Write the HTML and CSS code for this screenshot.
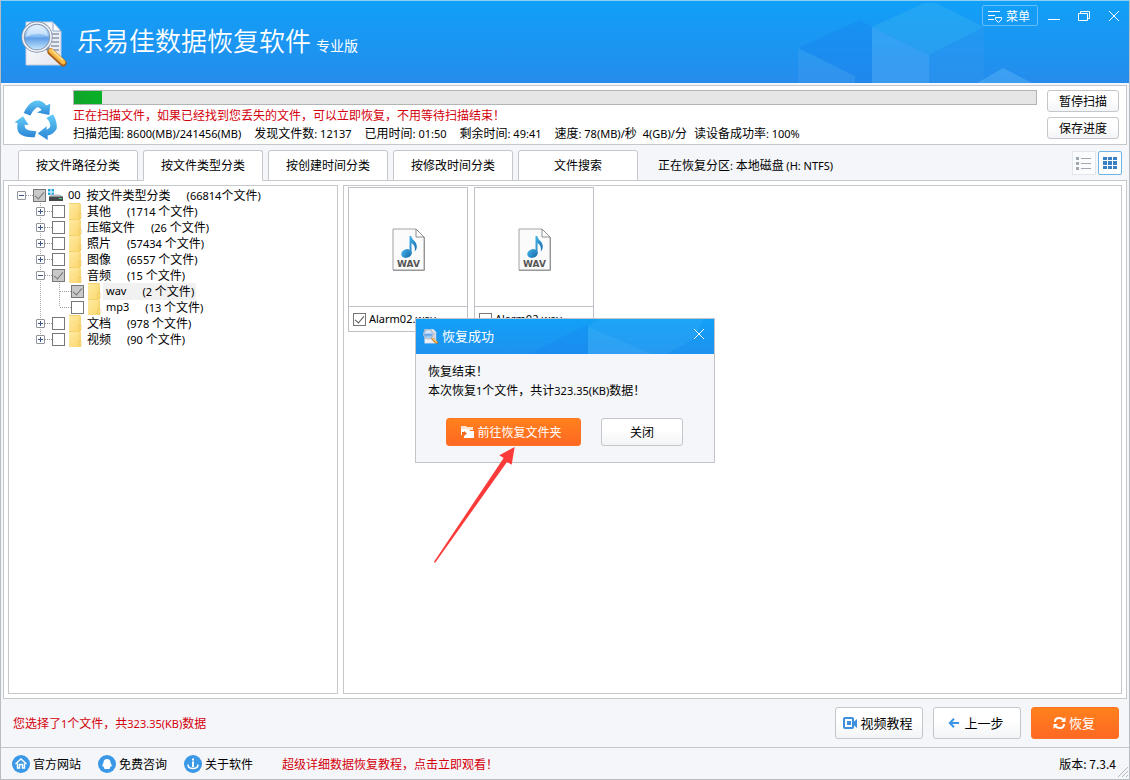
FILE: index.html
```html
<!DOCTYPE html>
<html lang="zh-CN">
<head>
<meta charset="utf-8">
<title>乐易佳数据恢复软件</title>
<link rel="stylesheet" href="styles.css">
</head>
<body>
<svg class="defs" aria-hidden="true">
  <defs>
    <linearGradient id="lens" x1="0" y1="0" x2="0" y2="1"><stop offset="0" stop-color="#d9ecff"/><stop offset=".45" stop-color="#8fc1f4"/><stop offset=".55" stop-color="#5f9fe8"/><stop offset="1" stop-color="#d2f0ff"/></linearGradient>
    <linearGradient id="paper" x1="0" y1="0" x2="1" y2="1"><stop offset="0" stop-color="#fff"/><stop offset="1" stop-color="#e3e5f0"/></linearGradient>
    <linearGradient id="handle" x1="0" y1="1" x2="1" y2="0"><stop offset="0" stop-color="#b9651a"/><stop offset=".5" stop-color="#ffc44d"/><stop offset="1" stop-color="#c97a20"/></linearGradient>
    <linearGradient id="recycle" x1="0" y1="0" x2="0" y2="1"><stop offset="0" stop-color="#62cbf7"/><stop offset="1" stop-color="#2b86d6"/></linearGradient>
    <linearGradient id="note" x1="0" y1="0" x2="1" y2="1"><stop offset="0" stop-color="#45b5ea"/><stop offset="1" stop-color="#1466a8"/></linearGradient>
    <linearGradient id="folder" x1="0" y1="0" x2="1" y2="1"><stop offset="0" stop-color="#ffeba4"/><stop offset="1" stop-color="#fbd76c"/></linearGradient>
    <symbol id="app" viewBox="0 0 46 46">
      <path d="M5 1h27l8 9v34H5z" fill="url(#paper)" stroke="#c3cbdc"/>
      <path d="M32 1v9h8z" fill="#fff" stroke="#8ea6c8"/>
      <path d="M30 13h8M31 17h7M31 21h7M30 25h8M29 29h9" stroke="#8b96aa" stroke-width="1.4"/>
      <circle cx="16" cy="16" r="14" fill="url(#lens)" stroke="#8794aa" stroke-width="3.4"/>
      <circle cx="16" cy="16" r="14" fill="none" stroke="#eef3fa" stroke-width="1.6"/>
      <path d="M5 16Q16 10 27 15Q25 5 16 4Q6 5 5 16" fill="#fff" opacity=".45"/>
      <path d="M26 27l5 5" stroke="#8794aa" stroke-width="4"/>
      <path d="M30 31l12 11" stroke="#a85c16" stroke-width="7" stroke-linecap="round"/>
      <path d="M30 30l12 11" stroke="url(#handle)" stroke-width="5" stroke-linecap="round"/>
      <path d="M31 29l11 10" stroke="#ffe29a" stroke-width="1.6"/>
    </symbol>
    <symbol id="folder-icon" viewBox="0 0 13 16">
      <path d="M0 0h11l1 2v14H0z" fill="url(#folder)"/>
      <path d="M0 .5h11v9" fill="none" stroke="#f3d270"/>
      <path d="M10 10h2v5h-2z" fill="#ffe9a0" stroke="#e8bd4c" stroke-width=".7"/>
    </symbol>
    <symbol id="wav" viewBox="0 0 33 43">
      <path d="M1 1h23l8 8v33H1z" fill="#fbfbfb" stroke="#a2a2a2"/>
      <path d="M1 42.4h31.5V9" fill="none" stroke="#858585" stroke-width=".8"/>
      <path d="M24 1v8h8z" fill="#fff" stroke="#8c8c8c"/>
      <ellipse cx="14.500" cy="25.500" rx="5.300" ry="4.300" transform="rotate(-18 14.5 25.5)" fill="url(#note)"/>
      <path d="M17.500 8h1.800c.2 4 5.500 5 5.500 10.500 0 2-1 4-2 5 .6-4-.5-7-3.300-8.500V26h-2z" fill="url(#note)"/>
      <text x="16.500" y="39" text-anchor="middle" class="wav-text">WAV</text>
    </symbol>
  </defs>
</svg>
<div class="window">
  <header class="titlebar">
    <svg class="cubes" width="369" height="82" viewBox="760 1 369 82" aria-hidden="true">
      <path d="M798 48L860 20L872 27V83H855V76z" fill="#177ff0" opacity=".3"/>
      <path d="M798 48L855 76V83H798z" fill="#fff" opacity=".06"/>
      <path d="M872 27L924 3H936L984 27L929 55z" fill="#46b8f0" opacity=".3"/>
      <path d="M872 27L929 55V83H872z" fill="#5cb4f8" opacity=".38"/>
      <path d="M929 55L984 27V83H929z" fill="#3498f2" opacity=".35"/>
      <path d="M977 83L1003 68L1032 83z" fill="#5cb4f8" opacity=".45"/>
    </svg>
    <svg class="logo" width="46" height="46"><use href="#app"/></svg>
    <h1 class="title">乐易佳数据恢复软件</h1>
    <span class="edition">专业版</span>
    <div class="window-tools">
      <button class="menu-button" type="button">
        <svg width="14" height="14" viewBox="0 0 14 14" fill="none" stroke="#fff"><path d="M0 2.500h12M0 6.500h7M0 10.500h6"/><path d="M7.500 8.500h6v2l-3 3-3-3z"/></svg>菜单
      </button>
      <button class="tool" type="button" aria-label="最小化"><svg width="12" height="12" viewBox="0 0 12 12" stroke="#fff"><path d="M0 9.500h12"/></svg></button>
      <button class="tool" type="button" aria-label="还原"><svg width="12" height="12" viewBox="0 0 12 12" fill="none" stroke="#fff"><path d="M.5 3.500h9v7h-9zM2.500 3V1.500h9v7H10"/></svg></button>
      <button class="tool" type="button" aria-label="关闭窗口"><svg width="12" height="12" viewBox="0 0 12 12" stroke="#fff"><path d="M1 1l10 10M11 1L1 11"/></svg></button>
    </div>
  </header>

  <section class="scan">
    <svg class="recycle" width="42" height="42" viewBox="14 14 126 134" preserveAspectRatio="none" fill="url(#recycle)" aria-hidden="true">
      <path d="M40 62Q52 32 70 24Q92 16 108 38L120 32L117 68L80 60L94 52Q84 38 75 48Q66 54 60 70z"/>
      <path d="M12 92L38 72L55 100L43 99Q41 114 58 118L78 120L73 139Q45 141 30 130Q17 118 22 94z"/>
      <path d="M117 72L128 66Q142 91 139 112Q130 130 112 134V148L82 127L109 104V115Q120 110 120 100Q119 88 108 78z"/>
    </svg>
    <div class="scan-info">
      <progress class="bar" value="28" max="964" aria-label="扫描进度"></progress>
      <p class="alert">正在扫描文件，如果已经找到您丢失的文件，可以立即恢复，不用等待扫描结束！</p>
      <p class="stats">
        <span>扫描范围<b>: 8600(MB)/241456(MB)</b></span>
        <span>发现文件数<b>: 12137</b></span>
        <span>已用时间<b>: 01:50</b></span>
        <span>剩余时间<b>: 49:41</b></span>
        <span>速度<b>: 78(MB)/</b>秒<b class="rate">4(GB)/</b>分<span class="success">读设备成功率<b>: 100%</b></span></span>
      </p>
    </div>
    <div class="scan-actions">
      <button class="button small" type="button">暂停扫描</button>
      <button class="button small" type="button">保存进度</button>
    </div>
  </section>

  <nav class="tabs">
    <button class="tab" type="button">按文件路径分类</button>
    <button class="tab active" type="button">按文件类型分类</button>
    <button class="tab" type="button">按创建时间分类</button>
    <button class="tab" type="button">按修改时间分类</button>
    <button class="tab" type="button">文件搜索</button>
    <p class="partition">正在恢复分区<b>:</b> 本地磁盘 <b>(H: NTFS)</b></p>
    <div class="views">
      <button class="view" type="button" aria-label="列表"><svg width="16" height="14" viewBox="0 0 16 14" fill="#a0a8b0"><path d="M0 1h3v3H0zM0 6h3v3H0zM0 11h3v3H0zM5 2h10v1H5zM5 7h10v1H5zM5 12h10v1H5z"/></svg></button>
      <button class="view on" type="button" aria-label="缩略图"><svg width="14" height="12" viewBox="0 0 14 12" fill="#3a80c4"><path d="M0 0h4v3H0zM5 0h4v3H5zM10 0h4v3h-4zM0 4h4v4H0zM5 4h4v4H5zM10 4h4v4h-4zM0 9h4v3H0zM5 9h4v3H5zM10 9h4v3h-4z"/></svg></button>
    </div>
  </nav>

  <main class="content">
    <aside class="tree">
      <div class="row root">
        <button class="twist open" type="button" aria-label="折叠"></button><i class="dots"></i>
        <input class="check" type="checkbox" id="t0" checked>
        <svg class="disk" width="15" height="12" viewBox="0 0 15 12"><path d="M0 0h2.500v2.500H0zM3.500 0H6v2.500H3.500zM0 3.500h2.500V6H0zM3.500 3.500H6V6H3.500z" fill="#20a8dc"/><path d="M3 5.500h9l3 2H1z" fill="#b9bec2"/><path d="M1 7.500h14V12H1z" fill="#45494c"/><path d="M11 9h3v1h-3z" fill="#47d88b"/></svg>
        <label class="name" for="t0"><b class="code">00</b><span>按文件类型分类</span><span><b>(66814</b>个文件<b>)</b></span></label>
      </div>
      <ul class="level one">
        <li class="row"><button class="twist" type="button" aria-label="展开"></button><i class="dots"></i><input class="check" type="checkbox" id="t1"><svg class="folder"><use href="#folder-icon"/></svg><label class="name" for="t1"><span>其他</span><span><b>(1714 </b>个文件<b>)</b></span></label></li>
        <li class="row"><button class="twist" type="button" aria-label="展开"></button><i class="dots"></i><input class="check" type="checkbox" id="t2"><svg class="folder"><use href="#folder-icon"/></svg><label class="name" for="t2"><span>压缩文件</span><span><b>(26 </b>个文件<b>)</b></span></label></li>
        <li class="row"><button class="twist" type="button" aria-label="展开"></button><i class="dots"></i><input class="check" type="checkbox" id="t3"><svg class="folder"><use href="#folder-icon"/></svg><label class="name" for="t3"><span>照片</span><span><b>(57434 </b>个文件<b>)</b></span></label></li>
        <li class="row"><button class="twist" type="button" aria-label="展开"></button><i class="dots"></i><input class="check" type="checkbox" id="t4"><svg class="folder"><use href="#folder-icon"/></svg><label class="name" for="t4"><span>图像</span><span><b>(6557 </b>个文件<b>)</b></span></label></li>
        <li>
          <div class="row"><button class="twist open" type="button" aria-label="折叠"></button><i class="dots"></i><input class="check" type="checkbox" id="t5" checked><svg class="folder"><use href="#folder-icon"/></svg><label class="name" for="t5"><span>音频</span><span><b>(15 </b>个文件<b>)</b></span></label></div>
          <ul class="level two">
            <li class="row"><i class="dots"></i><input class="check" type="checkbox" id="t6" checked><svg class="folder"><use href="#folder-icon"/></svg><label class="name selected" for="t6"><b>wav</b><span><b>(2 </b>个文件<b>)</b></span></label></li>
            <li class="row"><i class="dots"></i><input class="check" type="checkbox" id="t7"><svg class="folder"><use href="#folder-icon"/></svg><label class="name" for="t7"><b>mp3</b><span><b>(13 </b>个文件<b>)</b></span></label></li>
          </ul>
        </li>
        <li class="row"><button class="twist" type="button" aria-label="展开"></button><i class="dots"></i><input class="check" type="checkbox" id="t8"><svg class="folder"><use href="#folder-icon"/></svg><label class="name" for="t8"><span>文档</span><span><b>(978 </b>个文件<b>)</b></span></label></li>
        <li class="row"><button class="twist" type="button" aria-label="展开"></button><i class="dots"></i><input class="check" type="checkbox" id="t9"><svg class="folder"><use href="#folder-icon"/></svg><label class="name" for="t9"><span>视频</span><span><b>(90 </b>个文件<b>)</b></span></label></li>
      </ul>
    </aside>
    <section class="files">
      <div class="card">
        <div class="thumb"><svg width="33" height="43"><use href="#wav"/></svg></div>
        <div class="caption"><input class="check" type="checkbox" id="f1" checked><label for="f1">Alarm02.wav</label></div>
      </div>
      <div class="card">
        <div class="thumb"><svg width="33" height="43"><use href="#wav"/></svg></div>
        <div class="caption"><input class="check" type="checkbox" id="f2"><label for="f2">Alarm02.wav</label></div>
      </div>
    </section>
  </main>

  <section class="actions">
    <p class="selection">您选择了<b>1</b>个文件，共<b>323.35(KB)</b>数据</p>
    <button class="button large" type="button"><svg width="14" height="12" viewBox="0 0 14 12"><rect x="1" y="1" width="9" height="10" rx="1" fill="none" stroke="#3b8fdc" stroke-width="2"/><path d="M4 4h4v4H4z" fill="#3b8fdc"/><path d="M10.500 5L14 2v9l-3.500-3z" fill="#3b8fdc"/></svg>视频教程</button>
    <button class="button large" type="button"><svg class="back" width="11" height="10" viewBox="0 0 11 10" fill="none" stroke="#3b95e6" stroke-width="2"><path d="M11 5H2M6 .8L1.800 5L6 9.200"/></svg>上一步</button>
    <button class="button large primary" type="button"><svg width="13" height="14" viewBox="0 0 13 14" fill="none" stroke="#fff" stroke-width="2"><path d="M2 6Q2 2 6 2Q9 2 11 4M11 8Q11 12 7 12Q4 12 2 10"/><path d="M12.500 1v5H8zM.5 13V8H5z" fill="#fff" stroke="none"/></svg>恢复</button>
  </section>

  <footer class="footer">
    <a class="link" href="#site"><svg width="18" height="18" viewBox="0 0 18 18"><circle cx="9" cy="9" r="9" fill="#3a98e6"/><path d="M3.500 9L9 4l5.500 5M5.500 8.500V13H7.500V9.500h3V13h2V8.500" fill="none" stroke="#fff" stroke-width="1.400"/></svg>官方网站</a>
    <a class="link" href="#chat"><svg width="18" height="18" viewBox="0 0 18 18"><circle cx="9" cy="9" r="9" fill="#3a98e6"/><path d="M9 4C6.500 4 5.500 5.500 5.500 7.500L4 11l1.500.5L6.500 14h5l1-2.500L14 11l-1.500-3.500C12.500 5.500 11.500 4 9 4z" fill="#fff"/></svg>免费咨询</a>
    <a class="link" href="#about"><svg width="18" height="18" viewBox="0 0 18 18"><circle cx="9" cy="9" r="9" fill="#3a98e6"/><path d="M8 3.500h2v2H8zM8 6.500h2V12H8z" fill="#fff"/><path d="M4 9.500Q4 13.500 9 13.500Q14 13.500 14 9.500" fill="none" stroke="#fff" stroke-width="1.500"/></svg>关于软件</a>
    <a class="tutorial" href="#tutorial">超级详细数据恢复教程，点击立即观看！</a>
    <span class="version">版本: 7.3.4</span>
    <svg class="grip" width="12" height="12" viewBox="0 0 12 12" stroke="#b4b9bf" aria-hidden="true"><path d="M1 11L11 1M5 11l6-6M9 11l2-2"/></svg>
  </footer>

  <div class="overlay">
    <div class="dialog" role="dialog" aria-labelledby="dialog-title">
      <div class="dialog-head">
        <svg class="dialog-cubes" width="186" height="35" viewBox="0 0 186 35" aria-hidden="true"><path d="M0 35L60 5V35z" fill="#1280ee" opacity=".25"/><path d="M60 8L70 0H176L166 20L138 35H60z" fill="#4cb8f8" opacity=".2"/><path d="M60 8L124 35H60z" fill="#6cc0fa" opacity=".15"/></svg>
        <svg width="15" height="15"><use href="#app"/></svg>
        <h2 id="dialog-title">恢复成功</h2>
        <button class="tool dialog-close" type="button" aria-label="关闭提示"><svg width="12" height="12" viewBox="0 0 12 12" stroke="#fff"><path d="M1 1l10 10M11 1L1 11"/></svg></button>
      </div>
      <div class="dialog-body">
        <p>恢复结束！</p>
        <p>本次恢复<b>1</b>个文件，共计<b>323.35(KB)</b>数据！</p>
        <div class="dialog-buttons">
          <button class="button go primary" type="button"><svg width="13" height="12" viewBox="0 0 13 12"><path d="M0 0h5l1 1h6v3H0z" fill="#ffe3cf"/><path d="M0 3h8l1 2h4v7H3V9H0z" fill="#fff"/><path d="M1 6h2V5l3 2.500L3 10V9H1z" fill="#f26a1f"/></svg>前往恢复文件夹</button>
          <button class="button close" type="button">关闭</button>
        </div>
      </div>
      <svg class="pointer" width="90" height="123" viewBox="60 402 270 369" aria-hidden="true"><path d="M314 411L268 436L281 444L72 755L75 759L291 456L305 464z" fill="#fb3a3a"/></svg>
    </div>
  </div>
</div>
</body>
</html>
```
FILE: styles.css
```css
* { box-sizing: border-box; }
body, h1, h2, p, ul { margin: 0; padding: 0; }
body {
  font: 12px/18px "Noto Sans CJK SC", sans-serif;
  color: #000;
}
button, input { font: inherit; color: inherit; margin: 0; padding: 0; }
svg { display: block; flex: none; }
b { font: 11px/16px "Noto Sans", sans-serif; white-space: pre; }
p { white-space: nowrap; }
.defs { position: absolute; width: 0; height: 0; }

.window {
  position: relative;
  display: flex;
  flex-direction: column;
  min-height: 100vh;
  border: 1px solid #b9bdc2;
  border-top-color: #8fcdf5;
  background: #f4f6f9;
}

.titlebar {
  position: relative;
  display: flex;
  align-items: center;
  height: 82px;
  padding: 0 9px 0 20px;
  background: linear-gradient(#10a0f8, #258cec);
  color: #fff;
}
.cubes { position: absolute; right: 0; top: 0; }
.logo { margin-top: 4px; }
.title { margin: 0 0 4px 10px; font-size: 26px; line-height: 36px; font-weight: 350; }
.edition { margin: 6px 0 0 5px; font-size: 14px; }
.window-tools {
  position: relative;
  display: flex;
  align-items: center;
  align-self: flex-start;
  gap: 18px;
  margin: 4px 0 0 auto;
}
.tool { display: flex; border: 0; background: none; }
.menu-button {
  display: flex;
  align-items: center;
  gap: 4px;
  height: 21px;
  margin-right: -8px;
  padding: 0 7px 0 5px;
  border: 1px solid #63bdf9;
  border-radius: 2px;
  background: none;
}

.scan {
  display: flex;
  align-items: flex-start;
  margin: 2px 2px 0;
  padding: 4px 7px 2px 11px;
  border: 1px solid #c5c7cb;
  background: #fff;
}
.recycle { margin-top: 8px; }
.scan-info { flex: 1; min-width: 0; margin: 0 10px 0 16px; }
.bar {
  display: block;
  appearance: none;
  width: 100%;
  height: 15px;
  border: 1px solid #b4b4b4;
  background: #e6e6e6;
}
.bar::-webkit-progress-bar { background: #e6e6e6; }
.bar::-webkit-progress-value { background: linear-gradient(90deg, #12a32b, #08b226); }
.alert { margin-top: 1px; color: #d4000c; }
.stats { display: flex; gap: 13px; }
.rate { margin-left: 6px; }
.success { margin-left: 7px; }
.scan-actions { display: flex; flex-direction: column; gap: 5px; }

.button {
  display: flex;
  align-items: center;
  justify-content: center;
  border: 1px solid #c3c6ca;
  border-radius: 3px;
  background: linear-gradient(#fff 40%, #f3f4f6);
}
.button.small { width: 72px; height: 22px; }
.button.large { gap: 3px; width: 88px; height: 32px; padding-right: 2px; font-size: 13px; }
.button.primary { border-color: #ff7423; background: linear-gradient(#ff811c, #ff6824); color: #fff; }
.back { margin-right: 2px; }

.tabs {
  position: relative;
  display: flex;
  gap: 5px;
  margin: 5px 2px -1px;
  padding: 0 5px 0 15px;
}
.tab {
  width: 120px;
  height: 31px;
  padding-bottom: 2px;
  border: 1px solid #c5c7cb;
  border-radius: 3px 3px 0 0;
  background: #fff;
}
.tab.active { border-bottom-color: #fff; }
.partition { margin-left: 15px; line-height: 30px; }
.views { display: flex; gap: 2px; margin: 1px 0 0 auto; }
.view {
  display: flex;
  align-items: center;
  justify-content: center;
  width: 24px;
  height: 24px;
  border: 1px solid #e4e7ea;
  background: #fbfcfd;
}
.view.on { border-color: #6bb4e6; border-radius: 2px; background: #fff; }

.content {
  flex: 1;
  display: flex;
  gap: 5px;
  margin: 0 2px;
  padding: 4px;
  border: 1px solid #c5c7cb;
  background: #fff;
}
.tree { flex: none; width: 330px; padding: 1px 0; border: 1px solid #c5c7cb; }
.files {
  flex: 1;
  display: flex;
  flex-wrap: wrap;
  align-content: flex-start;
  gap: 6px;
  padding: 1px 4px;
  border: 1px solid #c5c7cb;
}

.row { display: flex; align-items: center; height: 16px; }
.root { padding-left: 8px; }
.level { list-style: none; }
.one .row { padding-left: 27px; }
.one .two .row { padding-left: 51px; }
.one, .two {
  background-image: repeating-linear-gradient(#aaa 0 1px, transparent 1px 2px);
  background-repeat: no-repeat;
}
.one { background-size: 1px calc(100% - 8px); background-position: 31px 0; }
.two { background-size: 1px calc(100% - 8px); background-position: 50px 0; }
.twist {
  position: relative;
  flex: none;
  width: 9px;
  height: 9px;
  border: 1px solid #8e949c;
  border-radius: 1px;
  background:
    linear-gradient(#3f5585, #3f5585) center / 5px 1px no-repeat,
    linear-gradient(#3f5585, #3f5585) center / 1px 5px no-repeat,
    #fff;
}
.twist.open { background: linear-gradient(#3f5585, #3f5585) center / 5px 1px no-repeat, #fff; }
.dots {
  flex: none;
  width: 7px;
  height: 1px;
  background: repeating-linear-gradient(90deg, #999 0 1px, transparent 1px 2px);
}
.two .dots { width: 11px; }
.check {
  appearance: none;
  flex: none;
  display: grid;
  place-items: center;
  width: 13px;
  height: 13px;
  border: 1px solid #777;
  background: #fff;
}
.check:checked::after {
  content: "";
  width: 4px;
  height: 8px;
  margin-bottom: 2px;
  border: solid #555;
  border-width: 0 1px 1px 0;
  transform: rotate(40deg);
}
.tree .check:checked { background: #c9c9c9; }
.tree .check:checked::after { border-color: #777; }
.disk { margin: 0 2px 0 2px; }
.folder { width: 13px; height: 16px; margin: 0 2px 0 4px; }
.name { display: flex; gap: 16px; align-items: center; padding: 0 2px 0 3px; line-height: 16px; white-space: nowrap; }
.code { margin-right: -10px; }
.selected { background: #f1f1f1; }

.card { width: 120px; border: 1px solid #bfc1c8; }
.thumb { display: grid; place-items: center; height: 118px; padding-top: 4px; }
.caption {
  display: flex;
  align-items: center;
  gap: 3px;
  height: 25px;
  padding-left: 4px;
  border-top: 1px solid #bfc1c8;
  font: 11px/16px "Noto Sans", sans-serif;
}
.wav-text { font: bold 9px "DejaVu Sans", sans-serif; fill: #555; }

.actions { display: flex; align-items: center; gap: 10px; height: 48px; padding: 0 10px 0 12px; }
.selection { flex: 1; color: #d4000c; }

.footer {
  position: relative;
  display: flex;
  align-items: center;
  gap: 17px;
  height: 32px;
  padding: 0 13px 0 11px;
  border-top: 1px solid #c5c7cb;
  white-space: nowrap;
}
.link { display: flex; align-items: center; gap: 3px; color: #000; text-decoration: none; }
.tutorial { margin-left: 12px; color: #d4000c; text-decoration: none; }
.version { margin-left: auto; }
.grip { position: absolute; right: 0; bottom: 1px; }

.overlay { position: absolute; inset: 0; display: grid; place-items: center; }
.dialog { position: relative; width: 300px; border: 1px solid #c1c5ca; background: #f4f6f9; }
.dialog-head {
  position: relative;
  display: flex;
  align-items: center;
  gap: 4px;
  height: 35px;
  padding: 0 9px 0 7px;
  background: linear-gradient(#12a0f6, #1e92f0);
  color: #fff;
}
.dialog-head h2 { font-size: 13px; font-weight: 400; }
.dialog-cubes { position: absolute; right: 0; top: 0; }
.dialog-close { position: relative; margin: 0 0 4px auto; }
.dialog-body { padding: 7px 12px 16px; line-height: 19px; }
.dialog-buttons { display: flex; gap: 20px; margin: 19px 0 0 18px; }
.button.go { gap: 3px; width: 135px; height: 28px; padding-right: 4px; }
.button.close { width: 82px; height: 28px; }
.pointer { position: absolute; left: 14px; top: 125px; pointer-events: none; }
```
